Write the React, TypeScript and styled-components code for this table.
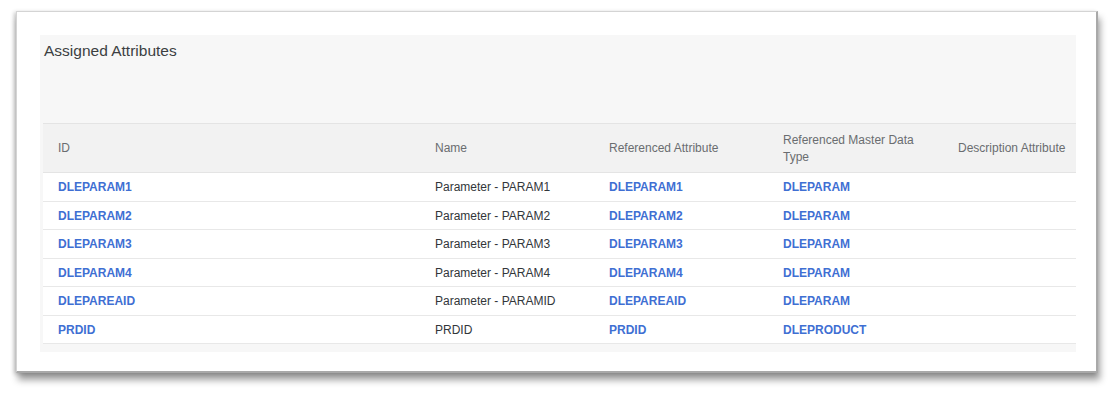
import React from "react";
import styled, { createGlobalStyle } from "styled-components";

const GlobalStyle = createGlobalStyle`
  html, body {
    margin: 0;
    padding: 0;
    background: #ffffff;
  }
  body {
    font-family: "Liberation Sans", Arial, sans-serif;
  }
`;

const Page = styled.div`
  padding: 11px 0 30px 16px;
`;

const Card = styled.section`
  width: 1082px;
  height: 362px;
  box-sizing: border-box;
  background: #fff;
  border: 1px solid #d4d4d4;
  border-right: 2px solid #a9a9a9;
  border-bottom: 2px solid #a8a8a8;
  box-shadow: 2px 7px 7px rgba(0, 0, 0, 0.38), -2px 1px 4px rgba(0, 0, 0, 0.2);
  padding: 23px 20px 0 23px;
`;

const Panel = styled.div`
  background: #f7f7f7;
  height: 317px;
  box-sizing: border-box;
  display: flex;
  flex-direction: column;
`;

const Title = styled.h2`
  margin: 0;
  height: 88px;
  box-sizing: border-box;
  padding: 6px 0 0 4px;
  font-size: 15.5px;
  line-height: 20px;
  font-weight: 400;
  color: #3c3f42;
`;

const Table = styled.div`
  margin-left: 3px;
  display: grid;
  grid-template-columns: 377px 174px 174px 175px 133px;
`;

const HeadCell = styled.div<{ $nowrap?: boolean }>`
  height: 50px;
  box-sizing: border-box;
  background: #f2f2f2;
  border-top: 1px solid #e4e4e4;
  border-bottom: 1px solid #e4e4e4;
  padding: 1px 12px 0 15px;
  display: flex;
  align-items: center;
  font-size: 12px;
  line-height: 17px;
  color: #6a6d70;
  white-space: ${(p) => (p.$nowrap ? "nowrap" : "normal")};
`;

const Cell = styled.div<{ $link?: boolean }>`
  height: 28.5px;
  box-sizing: border-box;
  background: #fff;
  border-bottom: 1px solid #e8e8e8;
  padding: 1px 10px 0 15px;
  display: flex;
  align-items: center;
  font-size: 12px;
  font-weight: ${(p) => (p.$link ? 700 : 400)};
  color: ${(p) => (p.$link ? "#3f6fd3" : "#32363a")};
  white-space: nowrap;
`;

const columns = [
  "ID",
  "Name",
  "Referenced Attribute",
  "Referenced Master Data Type",
  "Description Attribute",
];

const rows = [
  ["DLEPARAM1", "Parameter - PARAM1", "DLEPARAM1", "DLEPARAM"],
  ["DLEPARAM2", "Parameter - PARAM2", "DLEPARAM2", "DLEPARAM"],
  ["DLEPARAM3", "Parameter - PARAM3", "DLEPARAM3", "DLEPARAM"],
  ["DLEPARAM4", "Parameter - PARAM4", "DLEPARAM4", "DLEPARAM"],
  ["DLEPAREAID", "Parameter - PARAMID", "DLEPAREAID", "DLEPARAM"],
  ["PRDID", "PRDID", "PRDID", "DLEPRODUCT"],
];

export default function App() {
  return (
    <Page>
      <GlobalStyle />
      <Card>
        <Panel>
          <Title>Assigned Attributes</Title>
          <Table>
            {columns.map((c, i) => (
              <HeadCell key={c} $nowrap={i === columns.length - 1}>
                {c}
              </HeadCell>
            ))}
            {rows.map((r, i) => (
              <React.Fragment key={i}>
                <Cell $link>{r[0]}</Cell>
                <Cell>{r[1]}</Cell>
                <Cell $link>{r[2]}</Cell>
                <Cell $link>{r[3]}</Cell>
                <Cell />
              </React.Fragment>
            ))}
          </Table>
        </Panel>
      </Card>
    </Page>
  );
}
